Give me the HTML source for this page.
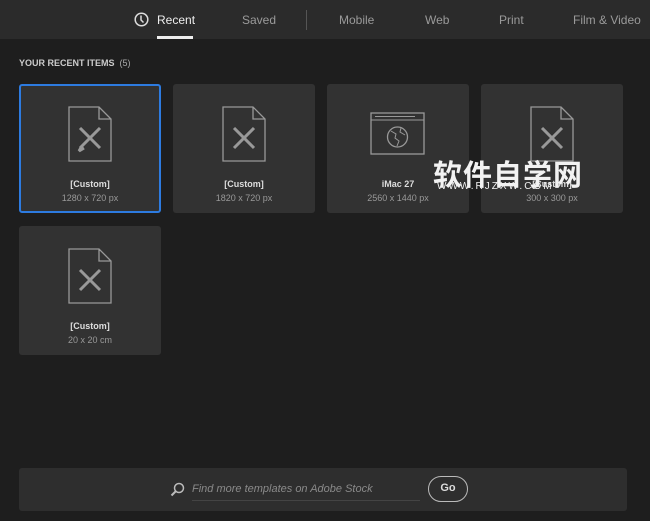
<!DOCTYPE html>
<html><head><meta charset="utf-8"><style>
body{margin:0;width:650px;height:521px;background:#1e1e1e;font-family:"Liberation Sans",sans-serif;position:relative;overflow:hidden}
.hdr{position:absolute;left:0;top:0;width:650px;height:39px;background:#2b2b2b}
.t{position:absolute;top:13px;font-size:12px;color:#9a9a9a}
.card{position:absolute;width:142px;height:129px;background:#323232;border-radius:3px;box-sizing:border-box}
.card svg{position:absolute;left:50%;top:22px;transform:translateX(-50%)}
.n{position:absolute;width:100%;top:95px;text-align:center;font-size:9px;color:#ddd;font-weight:bold}
.s{position:absolute;width:100%;top:109px;text-align:center;font-size:9px;color:#999}
</style></head><body>
<div class="hdr">
<svg style="position:absolute;left:134px;top:12px" width="15" height="15" viewBox="0 0 15 15"><circle cx="7.5" cy="7.5" r="6.3" fill="none" stroke="#ddd" stroke-width="1.5"/><path d="M7 3.5V8l2.5 2.5" fill="none" stroke="#ddd" stroke-width="1.5"/></svg>
<span class="t" style="left:157px;color:#eee">Recent</span>
<div style="position:absolute;left:157px;top:36px;width:36px;height:3px;background:#eee"></div>
<span class="t" style="left:242px">Saved</span>
<div style="position:absolute;left:306px;top:10px;width:1px;height:20px;background:#555"></div>
<span class="t" style="left:339px">Mobile</span>
<span class="t" style="left:425px">Web</span>
<span class="t" style="left:499px">Print</span>
<span class="t" style="left:573px">Film &amp; Video</span>
</div>
<div style="position:absolute;left:19px;top:58px;font-size:9px;color:#ccc;font-weight:bold">YOUR RECENT ITEMS <span style="font-weight:normal;color:#aaa">&nbsp;(5)</span></div>

<div class="card" style="left:19px;top:84px;border:2px solid #2d7be0"><svg width="46" height="56" viewBox="0 0 46 56" style="top:20px"><path d="M2 1h30l12 12v42H2z M32 1v12h12" fill="none" stroke="#999" stroke-width="1.3"/><path d="M13 22l20 20M33 22L13 42M15 40l-3 5 5-3" fill="none" stroke="#999" stroke-width="3"/></svg><div class="n" style="top:93px">[Custom]</div><div class="s" style="top:107px">1280 x 720 px</div></div>
<div class="card" style="left:173px;top:84px"><svg width="46" height="56" viewBox="0 0 46 56"><path d="M2 1h30l12 12v42H2z M32 1v12h12" fill="none" stroke="#999" stroke-width="1.3"/><path d="M13 22l20 20M33 22L13 42" fill="none" stroke="#999" stroke-width="3"/></svg><div class="n">[Custom]</div><div class="s">1820 x 720 px</div></div>
<div class="card" style="left:327px;top:84px"><svg width="56" height="44" viewBox="0 0 56 44" style="top:28px"><rect x="1" y="1" width="53" height="41" fill="none" stroke="#999" stroke-width="1.3"/><path d="M1 8h53M5 4.5h40" stroke="#999" stroke-width="1"/><circle cx="27.5" cy="25" r="10" fill="none" stroke="#999" stroke-width="1.3"/><path d="M21 19l5 3-1 4 4 3-2 5M31 16l-1 4 5 3" fill="none" stroke="#999"/></svg><div class="n">iMac 27</div><div class="s">2560 x 1440 px</div></div>
<div class="card" style="left:481px;top:84px"><svg width="46" height="56" viewBox="0 0 46 56"><path d="M2 1h30l12 12v42H2z M32 1v12h12" fill="none" stroke="#999" stroke-width="1.3"/><path d="M13 22l20 20M33 22L13 42" fill="none" stroke="#999" stroke-width="3"/></svg><div class="n">[Custom]</div><div class="s">300 x 300 px</div></div>
<div class="card" style="left:19px;top:226px"><svg width="46" height="56" viewBox="0 0 46 56"><path d="M2 1h30l12 12v42H2z M32 1v12h12" fill="none" stroke="#999" stroke-width="1.3"/><path d="M13 22l20 20M33 22L13 42" fill="none" stroke="#999" stroke-width="3"/></svg><div class="n">[Custom]</div><div class="s">20 x 20 cm</div></div>

<div style="position:absolute;left:433px;top:152px;font-size:29px;font-weight:bold;color:#f2f2f2;font-family:'Noto Sans CJK SC',sans-serif;letter-spacing:1px">软件自学网</div>
<div style="position:absolute;left:437px;top:181px;font-size:10px;color:#f2f2f2;letter-spacing:2px">WWW.RJZXW.COM</div>

<div style="position:absolute;left:19px;top:468px;width:608px;height:43px;background:#2e2e2e;border-radius:3px"></div>
<svg style="position:absolute;left:170px;top:482px" width="15" height="15" viewBox="0 0 15 15"><circle cx="9" cy="6" r="4.5" fill="none" stroke="#bbb" stroke-width="1.5"/><path d="M6 9l-4.5 4.5" stroke="#bbb" stroke-width="2"/></svg>
<div style="position:absolute;left:192px;top:483px;font-size:11px;font-style:italic;color:#8a8a8a">Find more templates on Adobe Stock</div>
<div style="position:absolute;left:192px;top:500px;width:228px;height:1px;background:#444"></div>
<div style="position:absolute;left:428px;top:476px;width:40px;height:26px;border:1.5px solid #bbb;border-radius:14px;box-sizing:border-box;color:#ddd;font-size:11px;font-weight:bold;text-align:center;line-height:23px">Go</div>
</body></html>
